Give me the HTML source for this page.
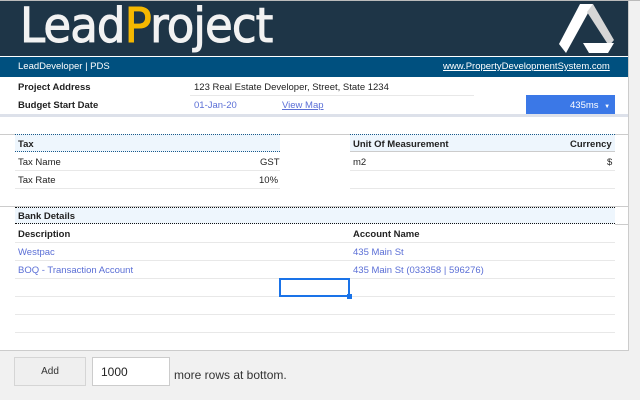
<!DOCTYPE html>
<html><head><style>
*{margin:0;padding:0;box-sizing:border-box}
body{width:640px;height:400px;background:#f1f1f1;font-family:"Liberation Sans",sans-serif;position:relative;overflow:hidden;font-size:9.5px;color:#222}
.a{position:absolute}
.main{left:0;top:0;width:629px;height:351px;background:#fff;border-right:1px solid #ccc;border-bottom:1px solid #ccc}
.hdr{left:0;top:1px;width:628px;height:55px;background:#1e3547}
.bar{left:0;top:57px;width:628px;height:20px;background:#00507f;color:#fff;font-size:9.5px}
.b{font-weight:bold}
.ln{height:1px;background:#e8e8e8}
.blue{color:#5b6fd6}
</style></head><body>
<div class="a main"></div>
<div class="a" style="left:0;top:0;width:640px;height:1px;background:#bbb"></div>
<div class="a hdr"></div>
<div class="a" style="left:20px;top:0px;font-size:48px;line-height:52px;color:#f2f2f2;letter-spacing:-1px;font-family:'DejaVu Sans',sans-serif;transform-origin:0 0;transform:scaleX(0.94);white-space:nowrap;-webkit-text-stroke:1px #f2f2f2">Lead<span style="color:#f5b800;-webkit-text-stroke:1px #f5b800">P</span>roject</div>
<svg class="a" style="left:0;top:0" width="640" height="60"><polygon points="580,4 593,4 566,53 559,44" fill="#fff"/><polygon points="593,4 614,40 609,46 587,12" fill="#d6d6d6"/><polygon points="583,43 614,43 608,53 589,53" fill="#fff"/></svg>
<div class="a bar"><span class="a" style="left:18px;top:4px">LeadDeveloper | PDS</span><span class="a" style="left:443px;top:4px;text-decoration:underline">www.PropertyDevelopmentSystem.com</span></div>
<div class="a b" style="left:18px;top:82px">Project Address</div>
<div class="a" style="left:194px;top:82px">123 Real Estate Developer, Street, State 1234</div>
<div class="a ln" style="left:190px;top:95px;width:284px"></div>
<div class="a b" style="left:18px;top:100px">Budget Start Date</div>
<div class="a blue" style="left:194px;top:100px">01-Jan-20</div>
<div class="a blue" style="left:282px;top:100px;text-decoration:underline">View Map</div>
<div class="a" style="left:526px;top:95px;width:89px;height:19px;background:#3b78e7;color:#fff;font-size:9.5px;padding:5px 0 0 44px">435ms <span style="font-size:6px;margin-left:3px">▼</span></div>
<div class="a" style="left:0;top:114px;width:628px;height:3px;background:#dde1ea"></div>
<div class="a ln" style="left:0;top:134px;width:628px;background:#ccc"></div>
<div class="a" style="left:15px;top:134px;width:265px;height:18px;background:#eef6fd;border-top:1px dotted #1a5a8a;border-bottom:1px dotted #1a5a8a"></div>
<div class="a" style="left:350px;top:134px;width:265px;height:18px;background:#eef6fd;border-top:1px dotted #1a5a8a;border-bottom:1px solid #ccc"></div>
<div class="a b" style="left:18px;top:139px">Tax</div>
<div class="a b" style="left:353px;top:139px">Unit Of Measurement</div>
<div class="a b" style="left:570px;top:139px">Currency</div>
<div class="a" style="left:18px;top:157px">Tax Name</div><div class="a" style="left:260px;top:157px">GST</div>
<div class="a" style="left:353px;top:157px">m2</div><div class="a" style="left:607px;top:157px">$</div>
<div class="a ln" style="left:15px;top:170px;width:265px"></div><div class="a ln" style="left:350px;top:170px;width:265px"></div>
<div class="a" style="left:18px;top:175px">Tax Rate</div><div class="a" style="left:259px;top:175px">10%</div>
<div class="a ln" style="left:15px;top:188px;width:265px"></div><div class="a ln" style="left:350px;top:188px;width:265px"></div>
<div class="a ln" style="left:0;top:206px;width:628px;background:#ccc"></div>
<div class="a" style="left:15px;top:207px;width:600px;height:17px;background:#eef6fd;border-top:1px dotted #111;border-bottom:1px dotted #111"></div>
<div class="a ln" style="left:615px;top:224px;width:13px;background:#ccc"></div>
<div class="a b" style="left:18px;top:211px">Bank Details</div>
<div class="a b" style="left:18px;top:229px">Description</div><div class="a b" style="left:353px;top:229px">Account Name</div>
<div class="a ln" style="left:15px;top:242px;width:600px"></div>
<div class="a blue" style="left:18px;top:247px">Westpac</div><div class="a blue" style="left:353px;top:247px">435 Main St</div>
<div class="a ln" style="left:15px;top:260px;width:600px"></div>
<div class="a blue" style="left:18px;top:265px">BOQ - Transaction Account</div><div class="a blue" style="left:353px;top:265px">435 Main St (033358 | 596276)</div>
<div class="a ln" style="left:15px;top:278px;width:600px"></div>
<div class="a ln" style="left:15px;top:296px;width:600px"></div>
<div class="a ln" style="left:15px;top:314px;width:600px"></div>
<div class="a ln" style="left:15px;top:332px;width:600px"></div>
<div class="a" style="left:279px;top:278px;width:71px;height:19px;border:2px solid #1a73e8"></div>
<div class="a" style="left:347px;top:294px;width:5px;height:5px;background:#1a73e8"></div>
<div class="a" style="left:14px;top:357px;width:72px;height:29px;border:1px solid #d5d5d5;background:#efefef;font-size:10px;text-align:center;padding-top:8px;color:#333">Add</div>
<div class="a" style="left:92px;top:357px;width:78px;height:29px;border:1px solid #ccc;background:#fff;font-size:12px;padding:7px 0 0 8px;color:#222">1000</div>
<div class="a" style="left:174px;top:368px;font-size:12px;color:#333">more rows at bottom.</div>
</body></html>
